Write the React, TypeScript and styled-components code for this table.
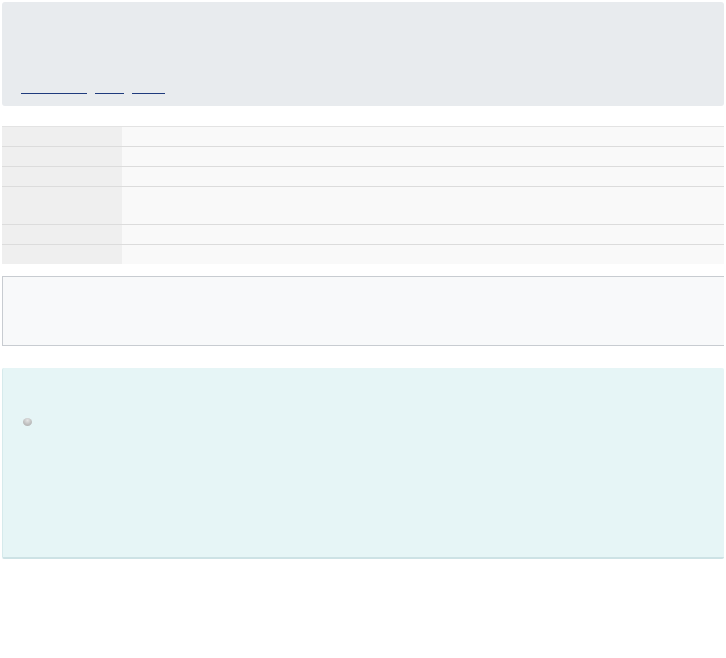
import React from "react";
import styled, { createGlobalStyle } from "styled-components";

const Global = createGlobalStyle`
  html, body { margin: 0; padding: 0; background: #ffffff; }
  body { font-family: "Liberation Sans", Arial, sans-serif; font-size: 13px; }
`;

const Page = styled.div`
  display: flex;
  flex-direction: column;
  padding: 2px 2px 0 2px;
`;

const Header = styled.div`
  height: 104px;
  background: #e8ebee;
  border-radius: 3px;
  box-sizing: border-box;
  padding: 0 19px 12px 19px;
  display: flex;
  align-items: flex-end;
`;

const Crumbs = styled.nav`
  display: flex;
  align-items: flex-end;
  gap: 8px;
  height: 14px;
`;

const Crumb = styled.a<{ $w: number }>`
  display: inline-block;
  width: ${(p) => p.$w}px;
  height: 13px;
  border-bottom: 1px solid #1f3b7d;
  color: transparent;
  font-size: 11px;
  overflow: hidden;
  white-space: nowrap;
`;

const Table = styled.div`
  margin-top: 20px;
  display: grid;
  grid-template-columns: 120px 1fr;
`;

const Label = styled.div<{ $h: number; $first?: boolean }>`
  height: ${(p) => p.$h}px;
  background: #efefef;
  border-top: ${(p) => (p.$first ? "1px solid #e3e3e3" : "1px solid #dcdcdc")};
  box-sizing: border-box;
`;

const Value = styled.div<{ $h: number; $first?: boolean }>`
  height: ${(p) => p.$h}px;
  background: #f9f9f9;
  border-top: ${(p) => (p.$first ? "1px solid #e3e3e3" : "1px solid #dcdcdc")};
  box-sizing: border-box;
`;

const Notice = styled.div`
  margin-top: 12px;
  height: 70px;
  box-sizing: border-box;
  background: #f8f9fa;
  border: 1px solid #c8ccd1;
  border-right: none;
`;

const InfoBox = styled.div`
  margin-top: 22px;
  height: 191px;
  box-sizing: border-box;
  background: #e6f5f6;
  border-left: 1px solid #d6eaec;
  border-bottom: 2px solid #cde2e5;
  border-radius: 2px;
  padding: 50px 0 0 20px;
`;

const Bullet = styled.span`
  display: block;
  width: 9px;
  height: 8px;
  border-radius: 50%;
  background: radial-gradient(circle at 50% 30%, #e4e4e4 0%, #bdbdbd 60%, #a9a9a9 100%);
`;

const rows = [20, 20, 20, 38, 20, 20];

export default function App() {
  return (
    <>
      <Global />
      <Page>
        <Header>
          <Crumbs>
            <Crumb $w={66} href="#">Main page</Crumb>
            <Crumb $w={29} href="#">Topic</Crumb>
            <Crumb $w={33} href="#">Article</Crumb>
          </Crumbs>
        </Header>
        <Table>
          {rows.map((h, i) => (
            <React.Fragment key={i}>
              <Label $h={h} $first={i === 0} />
              <Value $h={h} $first={i === 0} />
            </React.Fragment>
          ))}
        </Table>
        <Notice />
        <InfoBox>
          <Bullet />
        </InfoBox>
      </Page>
    </>
  );
}
